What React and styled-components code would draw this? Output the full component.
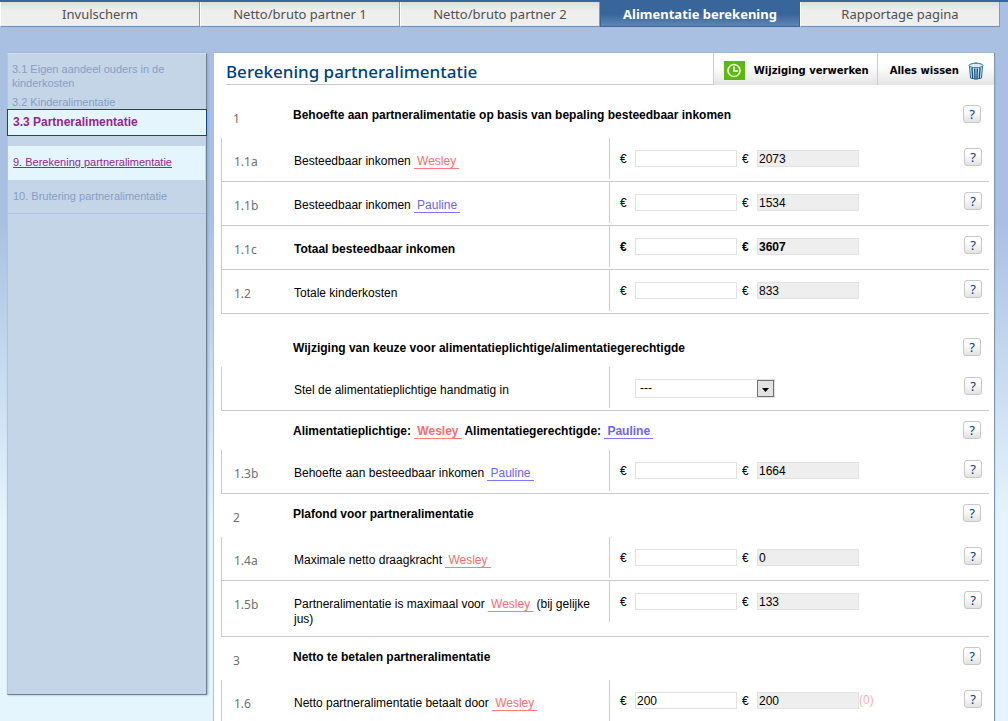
import React from "react";
import styled, { createGlobalStyle, css } from "styled-components";

const HUMANIST = '"Noto Sans", "Open Sans", sans-serif';

const GlobalStyle = createGlobalStyle`
  * { box-sizing: border-box; }
  body {
    margin: 0;
    min-height: 100vh;
    background: #e5f5fd linear-gradient(#a9c0e2 0, #a9c0e2 220px, #e5f5fd 520px) no-repeat;
    font: 12px/15px "Liberation Sans", Arial, sans-serif;
    color: #000;
  }
`;

const Page = styled.div`
  height: 100vh;
  overflow: hidden;
`;

const TabBar = styled.nav`
  display: flex;
  padding-right: 8px;
  border-top: 2px solid #38659a;
`;

const Tab = styled.a`
  flex: 1;
  height: 25px;
  line-height: 24px;
  text-align: center;
  text-decoration: none;
  font-family: ${HUMANIST};
  font-size: 13px;
  color: #505050;
  background: linear-gradient(#dcdcdc, #eeeeee 35%, #eeeeee);
  border-right: 1px solid #7f9bbd;
  border-bottom: 1px solid #6c8db3;
  border-left: 1px solid #fff;
  ${(p) =>
    p.$active &&
    css`
      color: #fff;
      font-weight: bold;
      background: linear-gradient(#38659a 50%, #5d86b4);
      border-color: #38659a;
    `}
`;

const Columns = styled.div`
  display: flex;
  align-items: flex-start;
  gap: 7px;
  padding: 26px 14px 0 7px;
`;

const Sidebar = styled.nav`
  flex: 0 0 200px;
  height: 642px;
  display: flex;
  flex-direction: column;
  padding-top: 8px;
  background: #c5d5e8;
  border: 1px solid #6b7f95;
  border-top-color: #d3dfee;
  border-left-color: #b0c4e0;
  box-shadow: 1px 0 2px #8ea8d0;
`;

const SideLink = styled.a`
  padding: 0 30px 0 4px;
  margin-bottom: 5px;
  font-size: 11px;
  line-height: 14px;
  color: #849fc5;
  text-decoration: none;
`;

const SideCurrent = styled(SideLink)`
  margin: -5px -1px 10px;
  padding: 0 5px;
  font-size: 12px;
  line-height: 25px;
  font-weight: bold;
  color: #92278f;
  background: #e5f5fd;
  border: 1px solid #0a4a84;
`;

const SideStep = styled(SideLink)`
  margin: 0 1px 0 0;
  padding: 0 5px;
  line-height: 33px;
  border-bottom: 1px solid #a9c4e6;
  ${(p) =>
    p.$active &&
    css`
      color: #92278f;
      background: #e5f5fd;
      border-color: #e5f5fd;
      text-decoration: underline;
    `}
`;

const Panel = styled.main`
  flex: 1;
  min-width: 0;
  background: #fff;
  box-shadow: 1px 0 1px #8095ae, -1px 0 0 #a9c0e2;
`;

const PanelHead = styled.header`
  display: flex;
  height: 32px;
  margin-bottom: 10px;
`;

const Title = styled.h1`
  flex: 1;
  margin: 0 0 0 12px;
  border-bottom: 1px solid #ccc;
  font-family: ${HUMANIST};
  font-size: 17px;
  line-height: 37px;
  font-weight: 500;
  color: #003f7d;
`;

const ToolButton = styled.button`
  display: flex;
  align-items: center;
  gap: 9px;
  padding: ${(p) => (p.$last ? "3px 10px 0 12px" : "3px 8px 0 10px")};
  border: 0;
  border-left: 1px solid #ccc;
  background: linear-gradient(#fff 40%, #e4e4e4);
  font: bold 10px/15px "DejaVu Sans", sans-serif;
  color: #000;
`;

const Sheet = styled.div`
  margin: 0 5px 0 7px;
`;

const Heading = styled.div`
  display: grid;
  grid-template-columns: 60px 1fr 19px;
  padding: 10px 7px 0 12px;
  height: ${(p) => (p.$code ? 43 : 39)}px;
  margin-top: ${(p) => (p.$gap ? 14 : 0)}px;
`;

const HeadingText = styled.h2`
  margin: 3px 0 0;
  font-size: 12px;
  line-height: 15px;
`;

const Code = styled.span`
  padding-top: ${(p) => (p.$heading ? 5 : 0)}px;
  font-family: ${HUMANIST};
  font-size: 12px;
  line-height: 17px;
  color: #707070;
`;

const Row = styled.div`
  display: grid;
  grid-template-columns: 60px 315px 1fr 19px;
  padding: 0 6px 0 12px;
  min-height: 44px;
  border-left: 1px solid #ccc;
  border-bottom: 1px solid #ccc;
  & > ${Code} {
    padding-top: 15px;
  }
`;

const Label = styled.label`
  padding: 16px 8px 9px 0;
  font-weight: ${(p) => (p.$strong ? "bold" : "normal")};
`;

const Name = styled.span`
  display: inline-block;
  padding: 0 3px;
  line-height: 14px;
  color: ${(p) => (p.$who === "Wesley" ? "#ff6b70" : "#6c63f5")};
  border-bottom: 1px solid ${(p) => (p.$who === "Wesley" ? "#ff7b80" : "#7d78ff")};
`;

const Cell = styled.div`
  display: flex;
  align-items: flex-start;
  height: 41px;
  padding: 12px 0 0 10px;
  border-left: 1px solid #ccc;
  font-weight: ${(p) => (p.$strong ? "bold" : "normal")};
`;

const Euro = styled.span`
  width: 15px;
  line-height: 19px;
`;

const Field = styled.input`
  width: 102px;
  height: 17px;
  margin: 0;
  padding: 0 1px;
  border: 1px solid #e2e2e2;
  border-radius: 0;
  background: ${(p) => (p.readOnly ? "#eee" : "#fff")};
  font: inherit;
  color: #000;
  outline: 0;
  & + ${Euro} {
    margin-left: 5px;
  }
`;

const Hint = styled.span`
  color: #ffb0b0;
  line-height: 17px;
`;

const SelectWrap = styled.div`
  position: relative;
  margin-left: 15px;
  width: 140px;
  height: 19px;
`;

const Select = styled.select`
  appearance: none;
  width: 100%;
  height: 100%;
  padding: 0 4px;
  border: 1px solid #e2e2e2;
  border-radius: 0;
  background: #fff;
  font: inherit;
  color: #000;
`;

const SelectArrow = styled.svg`
  position: absolute;
  top: 1px;
  right: 1px;
  pointer-events: none;
`;

const HelpButton = styled.button`
  width: 18px;
  height: 18px;
  padding: 0;
  border: 1px solid #c8c8c8;
  border-radius: 3px;
  background: linear-gradient(#fff 30%, #e2e2e2);
  font: 13px/16px ${HUMANIST};
  color: #003f7d;
  ${Row} > & {
    margin-top: 10px;
  }
`;

const Help = () => <HelpButton type="button" aria-label="Help">?</HelpButton>;

const ClockIcon = () => (
  <svg width="21" height="19" viewBox="0 0 21 19">
    <rect width="21" height="19" fill="#5cb911" />
    <circle cx="10" cy="9.500" r="6" fill="none" stroke="#e9f7d8" strokeWidth="1.700" />
    <path d="M10 5.500V10H14" fill="none" stroke="#fff" strokeWidth="1.600" />
  </svg>
);

const TrashIcon = () => (
  <svg width="16" height="18" viewBox="0 0 16 18">
    <path d="M1.500 4.500 L2.500 16 Q8 18.600 13.500 16 L14.500 4.500Z" fill="#d5e8f5" stroke="#2a6a98" />
    <path d="M4 6 4.700 16.500M6.700 6.500 7 17M9.300 6.500 9 17M12 6 11.300 16.500" stroke="#13507f" strokeWidth="1.400" />
    <ellipse cx="8" cy="3.500" rx="7" ry="2.200" fill="#d9ebf6" stroke="#2f74a3" />
    <path d="M5 1.500Q8-.2 11 1.500" fill="none" stroke="#5c93b8" />
  </svg>
);

const tabs = [
  "Invulscherm",
  "Netto/bruto partner 1",
  "Netto/bruto partner 2",
  "Alimentatie berekening",
  "Rapportage pagina",
];

const wesley = <Name $who="Wesley">Wesley</Name>;
const pauline = <Name $who="Pauline">Pauline</Name>;

function Section({ code, gap, children }) {
  return (
    <Heading $code={code} $gap={gap}>
      <Code $heading>{code}</Code>
      <HeadingText>{children}</HeadingText>
      <Help />
    </Heading>
  );
}

function AmountRow({ code, value, entered = "", strong, hint, children }) {
  const id = `amount-${code}`;
  return (
    <Row>
      <Code>{code}</Code>
      <Label htmlFor={id} $strong={strong}>{children}</Label>
      <Cell $strong={strong}>
        <Euro>€</Euro>
        <Field id={id} defaultValue={entered} />
        <Euro>€</Euro>
        <Field readOnly value={value} aria-label={`Berekend ${code}`} />
        {hint && <Hint>{hint}</Hint>}
      </Cell>
      <Help />
    </Row>
  );
}

export default function App() {
  return (
    <Page>
      <GlobalStyle />
      <TabBar>
        {tabs.map((t) => (
          <Tab key={t} href="#" $active={t === "Alimentatie berekening"}>{t}</Tab>
        ))}
      </TabBar>
      <Columns>
        <Sidebar>
          <SideLink href="#">3.1 Eigen aandeel ouders in de kinderkosten</SideLink>
          <SideLink href="#">3.2 Kinderalimentatie</SideLink>
          <SideCurrent href="#">3.3 Partneralimentatie</SideCurrent>
          <SideStep href="#" $active>9. Berekening partneralimentatie</SideStep>
          <SideStep href="#">10. Brutering partneralimentatie</SideStep>
        </Sidebar>
        <Panel>
          <PanelHead>
            <Title>Berekening partneralimentatie</Title>
            <ToolButton type="button"><ClockIcon />Wijziging verwerken</ToolButton>
            <ToolButton type="button" $last>Alles wissen<TrashIcon /></ToolButton>
          </PanelHead>
          <Sheet>
            <Section code="1">Behoefte aan partneralimentatie op basis van bepaling besteedbaar inkomen</Section>
            <AmountRow code="1.1a" value="2073">Besteedbaar inkomen {wesley}</AmountRow>
            <AmountRow code="1.1b" value="1534">Besteedbaar inkomen {pauline}</AmountRow>
            <AmountRow code="1.1c" value="3607" strong>Totaal besteedbaar inkomen</AmountRow>
            <AmountRow code="1.2" value="833">Totale kinderkosten</AmountRow>

            <Section gap>Wijziging van keuze voor alimentatieplichtige/alimentatiegerechtigde</Section>
            <Row>
              <Code />
              <Label htmlFor="payer">Stel de alimentatieplichtige handmatig in</Label>
              <Cell>
                <SelectWrap>
                  <Select id="payer">
                    <option>---</option>
                    <option>Wesley</option>
                    <option>Pauline</option>
                  </Select>
                  <SelectArrow width="17" height="17" viewBox="0 0 17 17">
                    <rect x=".5" y=".5" width="16" height="16" fill="#e2e2e2" stroke="#707070" />
                    <path d="M5 8h7l-3.500 4z" fill="#000" />
                  </SelectArrow>
                </SelectWrap>
              </Cell>
              <Help />
            </Row>

            <Section>Alimentatieplichtige: {wesley} Alimentatiegerechtigde: {pauline}</Section>
            <AmountRow code="1.3b" value="1664">Behoefte aan besteedbaar inkomen {pauline}</AmountRow>

            <Section code="2">Plafond voor partneralimentatie</Section>
            <AmountRow code="1.4a" value="0">Maximale netto draagkracht {wesley}</AmountRow>
            <AmountRow code="1.5b" value="133">
              Partneralimentatie is maximaal voor {wesley} (bij gelijke jus)
            </AmountRow>

            <Section code="3">Netto te betalen partneralimentatie</Section>
            <AmountRow code="1.6" value="200" entered="200" hint="(0)">
              Netto partneralimentatie betaalt door {wesley}
            </AmountRow>
          </Sheet>
        </Panel>
      </Columns>
    </Page>
  );
}
